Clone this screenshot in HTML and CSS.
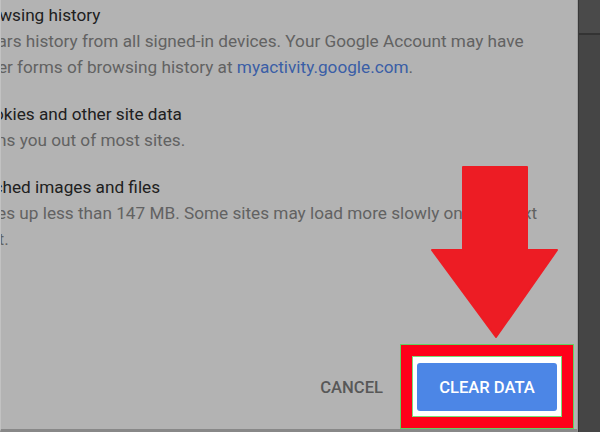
FILE: index.html
```html
<!DOCTYPE html>
<html>
<head>
<meta charset="utf-8">
<link rel="stylesheet" href="styles.css">
</head>
<body>
<div class="screen">
  <div class="dialog">
    <div class="content">
      <div class="section">
        <div class="title">Browsing history</div>
        <div class="desc">Clears history from all signed-in devices. Your Google Account may have<br>other forms of browsing history at <span class="link">myactivity.google.com</span>.</div>
      </div>
      <div class="section">
        <div class="title">Cookies and other site data</div>
        <div class="desc">Signs you out of most sites.</div>
      </div>
      <div class="section">
        <div class="title">Cached images and files</div>
        <div class="desc">Frees up less than 147 MB. Some sites may load more slowly on your next<br>visit.</div>
      </div>
    </div>
    <div class="footer">
      <span class="cancel">CANCEL</span>
      <div class="highlight">
        <div class="inner">
          <div class="clear">CLEAR DATA</div>
        </div>
      </div>
    </div>
    <svg class="arrow" width="128" height="172" viewBox="0 0 128 172">
      <path d="M32 1 L96 1 L96 84 L126 84 L65 171 L1 84 L32 84 Z" fill="#ed1c24" stroke="#ed1c24" stroke-width="2" stroke-linejoin="round"/>
    </svg>
  </div>
  <div class="side">
    <div class="side-top"></div>
    <div class="side-rest"></div>
  </div>
</div>
</body>
</html>
```

FILE: styles.css
```css
html, body {
  margin: 0;
  padding: 0;
}
body {
  width: 600px;
  height: 432px;
  overflow: hidden;
  font-family: Roboto, "Noto Sans", sans-serif;
  background: #444;
}
.screen {
  display: flex;
  height: 432px;
}
.dialog {
  position: relative;
  width: 576px;
  height: 429px;
  background: #b3b3b3;
  border-left: 1px solid #c2c2c2;
  border-right: 1px solid #9e9e9e;
  border-bottom: 3px solid #888;
  display: flex;
  flex-direction: column;
  overflow: hidden;
}
.content {
  margin-left: -28px;
  padding-top: 2px;
  white-space: nowrap;
}
.section {
  margin-bottom: 21px;
}
.title {
  font-size: 17.2px;
  line-height: 26px;
  color: #202020;
}
.desc {
  font-size: 17.2px;
  line-height: 26px;
  color: #626262;
}
.link {
  color: #3a5ea6;
}
.footer {
  margin-top: auto;
  display: flex;
  justify-content: flex-end;
  align-items: center;
  padding-right: 3px;
}
.cancel {
  font-size: 16.6px;
  font-weight: 500;
  color: #585858;
  margin-right: 17px;
  margin-top: 1px;
}
.highlight {
  border: 1px solid #62d162;
  background: #ff0019;
  padding: 11px;
}
.inner {
  border: 1px solid #79de79;
  background: #fff;
  padding: 6px 4px 5px 4px;
}
.clear {
  width: 140px;
  height: 48px;
  border-radius: 3px;
  background: #4c86e6;
  color: #fff;
  font-size: 16.6px;
  font-weight: 500;
  display: flex;
  align-items: center;
  justify-content: center;
}
.arrow {
  position: absolute;
  left: 430px;
  top: 166px;
}
.side {
  flex: 1;
  display: flex;
  flex-direction: column;
  border-left: 1px solid #383838;
}
.side-top {
  height: 33px;
  background: #4a4a4a;
  border-bottom: 2px solid #333;
}
.side-rest {
  flex: 1;
  background: #454545;
}
```
